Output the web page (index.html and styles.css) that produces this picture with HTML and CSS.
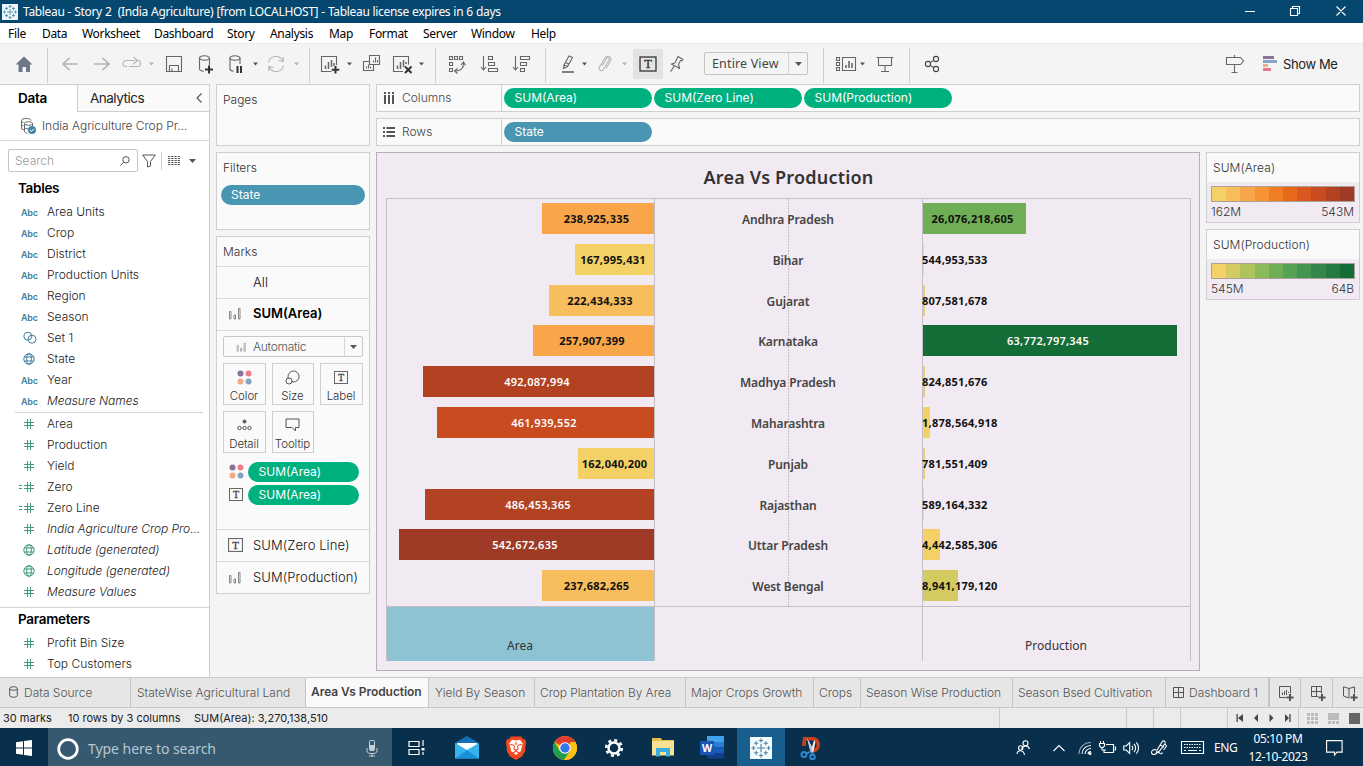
FILE: index.html
```html
<!DOCTYPE html>
<html lang="en">
<head>
<meta charset="utf-8">
<title>Tableau - Story 2 (India Agriculture)</title>
<link rel="stylesheet" href="styles.css">
</head>
<body>
<svg class="defs" width="0" height="0" aria-hidden="true">
  <symbol id="hash" viewBox="0 0 12 12"><path d="M4.500 1v10M7.500 1v10M1 4.500h10M1 7.500h10"/></symbol>
  <symbol id="eqhash" viewBox="0 0 16 12"><path d="M8.500 1v10M11.500 1v10M5 4.500h10M5 7.500h10M0 4.500h3M0 7.500h3"/></symbol>
  <symbol id="globe" viewBox="0 0 12 12"><circle cx="6" cy="6" r="5.2"/><ellipse cx="6" cy="6" rx="2.3" ry="5.2"/><path d="M1.3 4h9.4M1.3 8h9.4"/></symbol>
  <symbol id="set" viewBox="0 0 14 14"><circle cx="4.8" cy="5.2" r="4"/><circle cx="9" cy="8.2" r="4"/></symbol>
  <symbol id="bars" viewBox="0 0 13 13"><path d="M1.500 4.500h1.500v7.500h-1.500zM6 8h1.500v4h-1.500zM10.500 1.500h1.500v10.500h-1.500z"/></symbol>
  <symbol id="caret" viewBox="0 0 7 4"><path d="M0 0h7L3.500 4z"/></symbol>
  <symbol id="tbox" viewBox="0 0 14 13"><rect x=".5" y=".5" width="13" height="12" fill="none" stroke="#666"/><text x="7" y="9.800" text-anchor="middle" font-family="Liberation Serif, serif" font-size="10" fill="#444" stroke="#444" stroke-width=".3">T</text></symbol>
  <symbol id="dots" viewBox="0 0 15 15"><circle cx="3.500" cy="3.500" r="3" fill="#8a6f97"/><circle cx="11.500" cy="3.500" r="3" fill="#ef7c87"/><circle cx="3.500" cy="11.500" r="3" fill="#eeaa84"/><circle cx="11.500" cy="11.500" r="3" fill="#83a4c8"/></symbol>
  <symbol id="logo" viewBox="0 0 16 16"><path d="M8 5v6M5 8h6M8 1v3M6.500 2.500h3M8 12v3M6.500 13.500h3M2.500 6.500v3M1 8h3M13.500 6.500v3M12 8h3M4.500 3v3M3 4.500h3M11.500 3v3M10 4.500h3M4.500 10v3M3 11.500h3M11.500 10v3M10 11.500h3"/></symbol>
</svg>

<header class="titlebar">
  <svg class="applogo" width="16" height="16"><use href="#logo"/></svg>
  <span class="wintitle">Tableau - Story 2&nbsp; (India Agriculture) [from LOCALHOST] - Tableau license expires in 6 days</span>
  <svg class="winbtns" width="106" height="12" viewBox="0 0 106 12"><path d="M0 6.500h10M45.500 3.500h7v7h-7zM47.500 3.500v-2h7v7h-2M91.500 1.500l9 9M100.500 1.500l-9 9"/></svg>
</header>

<nav class="menubar">
  <span>File</span><span>Data</span><span>Worksheet</span><span>Dashboard</span><span>Story</span><span>Analysis</span><span>Map</span><span>Format</span><span>Server</span><span>Window</span><span>Help</span>
</nav>

<div class="toolbar">
  <svg class="ic" viewBox="0 0 20 20"><path class="home" d="M10 2.500L18.500 10.500h-2.500v7.500h-4V13H8.500v5h-4v-7.500H1.500z"/></svg>
  <i class="sep"></i>
  <svg class="ic dim" viewBox="0 0 20 20"><path d="M18 10H3M9.500 4L3 10l6.500 6" stroke-width="1.700"/></svg>
  <svg class="ic dim" viewBox="0 0 20 20"><path d="M2 10h15M10.500 4L17 10l-6.500 6" stroke-width="1.700"/></svg>
  <svg class="ic dim" viewBox="0 0 20 20"><path d="M5 12.500H3.500a2.500 2.500 0 0 1-2.500-2.500V9.500a3 3 0 0 1 3-3h9M11.500 3l4 3.500-4 3.500M16 6.500a2.500 2.500 0 0 1 2.500 2.500v1a2.500 2.500 0 0 1-2.500 2.500H7"/></svg>
  <svg class="car dim"><use href="#caret"/></svg>
  <svg class="ic" viewBox="0 0 20 20"><path d="M2.500 2.500h15v15h-15zM5.500 17v-5.500h9V17M8 14.500V17"/></svg>
  <svg class="ic" viewBox="0 0 20 20"><ellipse cx="8.500" cy="4" rx="5" ry="2.200"/><path d="M3.500 4v11c0 1.200 2 2 4.500 2.200M13.500 4v7"/><path class="heavy" d="M13 11.500v8M9 15.500h8"/></svg>
  <svg class="ic" viewBox="0 0 20 20"><ellipse cx="9" cy="4" rx="5" ry="2.200"/><path d="M4 4v11c0 1.200 1.500 2 3.500 2.200M14 4v6"/><path class="heavy" d="M11.500 12v7M15 12v7"/></svg>
  <svg class="car"><use href="#caret"/></svg>
  <svg class="ic dim" viewBox="0 0 20 20"><path d="M2.500 8.500a7.500 7.500 0 0 1 14-2M17.500 3l-.5 4.500-4.500-1M17.500 11.500a7.500 7.500 0 0 1-14 2M2.500 17l.5-4.500 4.500 1"/></svg>
  <svg class="car dim"><use href="#caret"/></svg>
  <i class="sep"></i>
  <svg class="ic" viewBox="0 0 20 20"><path d="M11.500 17.500h-10v-15h15V11"/><path d="M5.500 15v-3.500M8.500 15V8M11.500 13V6M14 12V9" stroke-width="1.500"/><path class="heavy" d="M15.500 12v7.500M11.700 15.800h7.600"/></svg>
  <svg class="car"><use href="#caret"/></svg>
  <svg class="ic" viewBox="0 0 20 20"><path d="M8.500 1.500h10v9h-10zM8.500 7.500h-6v9h10v-6M5.500 14.500v-2M7.500 14.500v-4M9.500 14.500v-2M12.500 8.500v-2M14.500 8.500v-5M16.500 8.500V6"/></svg>
  <svg class="ic" viewBox="0 0 20 20"><path d="M10 17.500H.5v-15h15v8"/><path d="M4.500 15v-3.500M7.500 15V8M10.500 13V6M13 10V8" stroke-width="1.500"/><path class="heavy" d="M12 12.500l6.500 6.500M18.500 12.500l-6.500 6.500"/></svg>
  <svg class="car"><use href="#caret"/></svg>
  <i class="sep"></i>
  <svg class="ic" viewBox="0 0 20 20"><path d="M2.500 2.500h3v3h-3zM7.500 2.500h3v3h-3zM12.500 2.500h3v3h-3zM2.500 8.500h3v3h-3zM2.500 14.500h3v3h-3zM16.500 9c.5 5-3 8-8 8M14 11l2.500-3 2 3.500M10.500 14.500l-3 2.500 3 2.500"/></svg>
  <svg class="ic" viewBox="0 0 20 20"><path d="M3.500 2v14M1 13l2.500 3L6 13M8.500 2.500h4v3h-4zM8.500 8.500h6v3h-6zM8.500 14.500h9v3h-9z"/></svg>
  <svg class="ic" viewBox="0 0 20 20"><path d="M3.500 2v14M1 13l2.500 3L6 13M8.500 2.500h9v3h-9zM8.500 8.500h6v3h-6zM8.500 14.500h4v3h-4z"/></svg>
  <i class="sep"></i>
  <svg class="ic" viewBox="0 0 20 20"><path d="M6 11l5-9 3.500 1.500-5 9zM6 11l-.5 3.500L9.500 12.500M7.500 8.500l3.500 1.800"/><path d="M4 18h12" stroke-width="1.600"/></svg>
  <svg class="car"><use href="#caret"/></svg>
  <svg class="ic dim" viewBox="0 0 20 20"><path d="M7 12l4.500-7.500c1-1.700 3.500-.5 2.500 1.500L8.500 15.500c-1.500 2.500-5.500.5-4-2.500L10 4c2-3.500 7.500-1 5.500 2.800L11 14.500"/></svg>
  <svg class="car dim"><use href="#caret"/></svg>
  <span class="tbtn"><svg width="18" height="16" viewBox="0 0 18 16"><rect x="1" y="1" width="16" height="14" fill="none" stroke="#333" stroke-width="1.300"/><text x="9" y="12" text-anchor="middle" font-family="Liberation Serif, serif" font-size="12.500" fill="#333" stroke="#333" stroke-width=".3">T</text></svg></span>
  <svg class="ic" viewBox="0 0 20 20"><path d="M11 2.500l5 3-1 1.200-1.500-.2-2 4 1 4-8-4.500 3.500-1.300 2-4zM7 12.300l-3.500 5.500"/></svg>
  <div class="viewsel"><span>Entire View</span><b><svg class="car"><use href="#caret"/></svg></b></div>
  <i class="sep"></i>
  <svg class="ic" viewBox="0 0 20 20"><path d="M.5 3.500h3v3h-3zM.5 8.500h3v3h-3zM.5 13.500h3v3h-3zM6.500 3.500h13v13h-13z"/><path d="M10 14v-3M13 14V7M16 14V9" stroke-width="1.600"/></svg>
  <svg class="car"><use href="#caret"/></svg>
  <svg class="ic" viewBox="0 0 20 20"><path d="M1.500 3.500h17M3.500 3.500v8h13v-8M10 11.500v6M6 17.500h8"/></svg>
  <i class="sep"></i>
  <svg class="ic dark" viewBox="0 0 20 20"><circle cx="6" cy="10" r="2.600"/><circle cx="14" cy="5" r="2.600"/><circle cx="14" cy="15" r="2.600"/><path d="M8.300 8.600l3.500-2.200M8.300 11.400l3.500 2.200"/></svg>
  <svg class="ic" viewBox="0 0 20 20"><path d="M1.500 3.500h14l3 3.500-3 3.500h-14zM9.500 1v2M9.500 11v7.500M6.500 18.500h6"/></svg>
  <div class="showme"><svg width="15" height="16" viewBox="0 0 15 16"><path fill="#8a7396" d="M0 0h11v3H0z"/><path fill="#86a5c6" d="M0 4h14v3H0z"/><path fill="#efa98b" d="M0 8h5v3H0z"/><path fill="#e37784" d="M0 12h8v3H0z"/></svg><span>Show Me</span></div>
</div>

<main class="work">
  <aside class="datapane">
    <div class="dptabs"><b>Data</b><span>Analytics<svg width="6" height="10" viewBox="0 0 6 10"><path d="M5.500.5L1 5l4.500 4.500" fill="none" stroke="#555" stroke-width="1.200"/></svg></span></div>
    <div class="source">
      <svg width="16" height="16" viewBox="0 0 16 16"><g fill="none" stroke="#666"><path d="M1.500 11V3M11 2.500C10.500 1 8.500.5 6 .5S1.500 1.300 1.500 2.500c0 1 1 1.500 2 2M1.500 7l2 1M1.500 11l3 1"/><ellipse cx="8.500" cy="5.500" rx="4" ry="1.800"/><path d="M4.500 5.500v8c0 .8 1.500 1.500 3 1.700M12.500 5.500v3M4.500 9.500c1 1 2 1.300 3.500 1.300"/></g><circle cx="12" cy="12" r="4" fill="#4385a6"/><path d="M10 12l1.500 1.500L14 10.800" fill="none" stroke="#fff"/></svg>
      <span>India Agriculture Crop Pr...</span>
    </div>
    <div class="searchrow">
      <div class="search"><span>Search</span><svg width="10" height="10" viewBox="0 0 10 10"><circle cx="6" cy="3.800" r="3.200"/><path d="M3.500 6.200L.5 9.500"/></svg></div>
      <svg class="funnel" width="14" height="14" viewBox="0 0 14 14"><path d="M.7 1h12.600L8.500 7.500v4.500L5.500 13V7.500z"/></svg>
      <i></i>
      <svg class="grid" width="12" height="10" viewBox="0 0 12 10"><path d="M0 .5h12M0 2.500h12M0 4.500h12M0 6.500h12M0 8.500h12" stroke="#555" stroke-dasharray="2.250 1" /></svg>
      <svg class="car"><use href="#caret"/></svg>
    </div>
    <h3>Tables</h3>
    <ul class="fields dims">
      <li><em>Abc</em>Area Units</li>
      <li><em>Abc</em>Crop</li>
      <li><em>Abc</em>District</li>
      <li><em>Abc</em>Production Units</li>
      <li><em>Abc</em>Region</li>
      <li><em>Abc</em>Season</li>
      <li><svg class="blue" width="14" height="14"><use href="#set"/></svg>Set 1</li>
      <li><svg class="blue" width="12" height="12"><use href="#globe"/></svg>State</li>
      <li><em>Abc</em>Year</li>
      <li class="it"><em>Abc</em>Measure Names</li>
    </ul>
    <ul class="fields meas">
      <li><svg width="12" height="12"><use href="#hash"/></svg>Area</li>
      <li><svg width="12" height="12"><use href="#hash"/></svg>Production</li>
      <li><svg width="12" height="12"><use href="#hash"/></svg>Yield</li>
      <li><svg class="calc" width="16" height="12"><use href="#eqhash"/></svg>Zero</li>
      <li><svg class="calc" width="16" height="12"><use href="#eqhash"/></svg>Zero Line</li>
      <li class="it"><svg width="12" height="12"><use href="#hash"/></svg>India Agriculture Crop Pro...</li>
      <li class="it"><svg width="12" height="12"><use href="#globe"/></svg>Latitude (generated)</li>
      <li class="it"><svg width="12" height="12"><use href="#globe"/></svg>Longitude (generated)</li>
      <li class="it"><svg width="12" height="12"><use href="#hash"/></svg>Measure Values</li>
    </ul>
    <section class="params">
      <h3>Parameters</h3>
      <ul class="fields">
        <li><svg width="12" height="12"><use href="#hash"/></svg>Profit Bin Size</li>
        <li><svg width="12" height="12"><use href="#hash"/></svg>Top Customers</li>
      </ul>
    </section>
  </aside>

  <div class="cards">
    <section class="card pages"><h4>Pages</h4></section>
    <section class="card filters"><h4>Filters</h4><div class="pill blue">State</div></section>
    <section class="card marks">
      <h4>Marks</h4>
      <div class="mrow"><span></span>All</div>
      <div class="mrow on"><svg class="barsic" width="13" height="13"><use href="#bars"/></svg>SUM(Area)</div>
      <div class="mbody">
        <div class="mtype"><svg class="barsic" width="10" height="10"><use href="#bars"/></svg><span>Automatic</span><b><svg class="car"><use href="#caret"/></svg></b></div>
        <div class="mbtns">
          <div><svg width="15" height="15"><use href="#dots"/></svg>Color</div>
          <div><svg class="ln" width="15" height="15" viewBox="0 0 15 15"><circle cx="8.500" cy="6.500" r="5.500"/><circle cx="4" cy="11" r="3" fill="#fafafa"/></svg>Size</div>
          <div><svg width="14" height="13"><use href="#tbox"/></svg>Label</div>
          <div><svg class="ln" width="15" height="12" viewBox="0 0 15 12"><circle cx="7.500" cy="2.500" r="1.500" fill="#555"/><circle cx="2.500" cy="9" r="1.700"/><circle cx="7.500" cy="9" r="1.700"/><circle cx="12.500" cy="9" r="1.700"/></svg>Detail</div>
          <div><svg class="ln" width="15" height="14" viewBox="0 0 15 14"><path d="M1 1h13v8.500h-3.500V13L7 9.500H1z"/></svg>Tooltip</div>
        </div>
        <div class="mpill"><svg width="15" height="15"><use href="#dots"/></svg><div class="pill green">SUM(Area)</div></div>
        <div class="mpill"><svg width="14" height="13"><use href="#tbox"/></svg><div class="pill green">SUM(Area)</div></div>
      </div>
      <div class="mrow"><svg width="15" height="14"><use href="#tbox"/></svg>SUM(Zero Line)</div>
      <div class="mrow"><svg class="barsic" width="13" height="13"><use href="#bars"/></svg>SUM(Production)</div>
    </section>
  </div>

  <div class="right">
    <div class="shelf"><div class="sname"><svg width="12" height="12" viewBox="0 0 12 12"><path d="M2 0v2M2 3v9M6 0v2M6 3v9M10 0v2M10 3v9"/></svg>Columns</div><div class="pill green">SUM(Area)</div><div class="pill green">SUM(Zero Line)</div><div class="pill green">SUM(Production)</div></div>
    <div class="shelf"><div class="sname"><svg width="12" height="12" viewBox="0 0 12 12"><path d="M0 2h2M3.500 2H12M0 6h2M3.500 6H12M0 10h2M3.500 10H12"/></svg>Rows</div><div class="pill blue">State</div></div>
    <div class="viewrow">
      <section class="viz">
        <h1>Area Vs Production</h1>
        <div class="plot">
          <div class="col area">
            <div><b style="width:112px;background:#f9a64b">238,925,335</b></div>
            <div><b style="width:79px;background:#f3d166">167,995,431</b></div>
            <div><b style="width:105px;background:#f8bd5c">222,434,333</b></div>
            <div><b style="width:121px;background:#f9a64b">257,907,399</b></div>
            <div><b class="lt" style="width:231px;background:#b34223">492,087,994</b></div>
            <div><b class="lt" style="width:217px;background:#c94c21">461,939,552</b></div>
            <div><b style="width:76px;background:#f3d166">162,040,200</b></div>
            <div><b class="lt" style="width:229px;background:#b34223">486,453,365</b></div>
            <div><b class="lt" style="width:255px;background:#9e3a26">542,672,635</b></div>
            <div><b style="width:112px;background:#f8bd5c">237,682,265</b></div>
          </div>
          <div class="col names">
            <div>Andhra Pradesh</div><div>Bihar</div><div>Gujarat</div><div>Karnataka</div><div>Madhya Pradesh</div><div>Maharashtra</div><div>Punjab</div><div>Rajasthan</div><div>Uttar Pradesh</div><div>West Bengal</div>
          </div>
          <div class="col prod">
            <div><b style="width:103px;background:#6fae55">26,076,218,605</b></div>
            <div><b class="sm" style="width:1px;background:#ead9a2">544,953,533</b></div>
            <div><b class="sm" style="width:2px;background:#e8cd83">807,581,678</b></div>
            <div><b class="lt" style="width:254px;background:#146c36">63,772,797,345</b></div>
            <div><b class="sm" style="width:2px;background:#e8cd83">824,851,676</b></div>
            <div><b class="sm" style="width:7px;background:#f3d166">1,878,564,918</b></div>
            <div><b class="sm" style="width:2px;background:#e8cd83">781,551,409</b></div>
            <div><b class="sm" style="width:1px;background:#ead9a2">589,164,332</b></div>
            <div><b class="sm" style="width:17px;background:#f3d166">4,442,585,306</b></div>
            <div><b class="sm" style="width:35px;background:#d3ca60">8,941,179,120</b></div>
          </div>
        </div>
        <div class="axes"><div class="sel">Area</div><div></div><div>Production</div></div>
      </section>
      <div class="legends">
        <section class="card legend"><h4>SUM(Area)</h4><div class="lbody"><div class="ramp orange"></div><p><span>162M</span><span>543M</span></p></div></section>
        <section class="card legend"><h4>SUM(Production)</h4><div class="lbody"><div class="ramp grn"></div><p><span>545M</span><span>64B</span></p></div></section>
      </div>
    </div>
  </div>
</main>

<div class="tabs">
  <div class="ds"><svg width="9" height="12" viewBox="0 0 9 12"><ellipse cx="4.500" cy="2.500" rx="3.800" ry="1.800"/><path d="M.7 2.500v7c0 2.300 7.600 2.300 7.600 0v-7"/></svg>Data Source</div>
  <div>StateWise Agricultural Land</div>
  <div class="active">Area Vs Production</div>
  <div>Yield By Season</div>
  <div>Crop Plantation By Area</div>
  <div>Major Crops Growth</div>
  <div>Crops</div>
  <div>Season Wise Production</div>
  <div>Season Bsed Cultivation</div>
  <div class="dash"><svg width="11" height="11" viewBox="0 0 11 11"><path d="M.5.500h10v10h-10zM5.500.500v10M.5 5.500h10"/></svg>Dashboard 1</div>
  <div class="nw first"><svg width="16" height="15" viewBox="0 0 16 15"><path d="M8 11.500H1.500V.5h11v7M4.500 9V6.500M6.500 9V5M8.500 9V4M10.500 7V6"/><path class="plus" d="M12 8v7M8.500 11.500h7"/></svg></div>
  <div class="nw"><svg width="16" height="15" viewBox="0 0 16 15"><path d="M8 10.500H1.500V.5h10v7M6.500.5v10M1.500 5.500h10"/><path class="plus" d="M12 8v7M8.500 11.500h7"/></svg></div>
  <div class="nw"><svg width="16" height="15" viewBox="0 0 16 15"><path d="M7 12L1.500 10V.8L7 2.500 12.500.8V7.500M7 2.500V12"/><path class="plus" d="M12 8v7M8.500 11.500h7"/></svg></div>
</div>

<div class="status">
  <span class="s1">30 marks</span><span class="s2">10 rows by 3 columns</span><span class="s3">SUM(Area): 3,270,138,510</span>
  <i></i><i></i><i></i><i></i>
  <div class="pager"><svg width="56" height="8" viewBox="0 0 56 8"><path d="M.5 0h1.300v8H.5zM7 0v8L2 4zM22 0v8L18 4zM33.500 0v8L37.500 4zM49 0v8l4-4zM53.300 0h1.300v8h-1.300z"/></svg></div>
  <div class="views"><svg width="54" height="11" viewBox="0 0 54 11"><path fill="#bbb" d="M0 0h3v3H0zM4 0h3v3H4zM8 0h3v3H8zM0 4h3v3H0zM4 4h3v3H4zM8 4h3v3H8zM0 8h3v3H0zM4 8h3v3H4zM8 8h3v3H8zM21 0h11v7H21zM21 8h3v3h-3zM25 8h3v3h-3zM29 8h3v3h-3z"/><path fill="#666" d="M42 0h11v11H42z"/></svg></div>
</div>

<footer class="taskbar">
  <div class="start"><svg width="16" height="16" viewBox="0 0 16 16"><path fill="#fff" d="M0 2.200l7-1v6.300H0zM8 1.100L16 0v7.500H8zM0 8.500h7v6.300l-7-1zM8 8.500h8V16l-8-1.100z"/></svg></div>
  <div class="wsearch"><svg width="22" height="22" viewBox="0 0 22 22"><circle cx="11" cy="11" r="9.300" fill="none" stroke="#fff" stroke-width="2.700"/></svg><span>Type here to search</span><svg width="12" height="17" viewBox="0 0 12 17"><rect x="3.500" y=".5" width="5" height="10" rx="1" fill="none" stroke="#c3cfd6"/><path fill="#c3cfd6" d="M4 5h4v5.500H4z"/><path d="M1 8v3c0 2 2 2.500 5 2.500s5-.5 5-2.500V8M6 13.500v3M3 16h6" fill="none" stroke="#c3cfd6"/></svg></div>
  <div><svg width="18" height="16" viewBox="0 0 18 16" fill="none" stroke="#fff" stroke-width="1.200"><path d="M1 1.500h10v5H1zM1 9.500h10v5H1zM15 0v6M15 12v3"/><path d="M13.500 8h3v2.500h-3z" fill="#fff" stroke="none"/></svg></div>
  <div><svg width="24" height="23" viewBox="0 0 24 23"><path fill="#1670b8" d="M0 7l12-7 12 7v4H0z"/><path fill="#fff" d="M2 7h20v6l-10 4L2 13z"/><path fill="#35b4ee" d="M0 7l12 7 12-7v15.500H0z"/><path fill="#1c8fda" d="M0 22.500L12 14 24 22.500z"/></svg></div>
  <div><svg width="22" height="24" viewBox="0 0 22 24"><path fill="#f4461f" d="M6 .5h10l2 2.500 2.500.5.500 3-1 9-3 5-6 3.500-6-3.500-3-5-1-9 .5-3L4 3z"/><path fill="#fff" d="M11 4.500l4-.8 2.800 3.800-1.300 4.500-.5 3L11 19l-5-4-.5-3L4.200 7.500 7 3.700z"/><path d="M5 8.300l4 1M17 8.300l-4 1M11 6v3M9.500 9.500L9 13l2 1.500 2-1.500-.5-3.500M8 17l3-2 3 2" fill="none" stroke="#f4461f" stroke-width="1.100"/></svg></div>
  <div><svg width="24" height="24" viewBox="0 0 24 24"><circle cx="12" cy="12" r="12" fill="#fbc116"/><path fill="#df3b2f" d="M12 12L1.600 6A12 12 0 0 1 22.400 6z"/><path fill="#249e4c" d="M1.600 6A12 12 0 0 0 11 24l6-9-5-3-5 3z"/><path fill="#fbc116" d="M22.400 6A12 12 0 0 1 11 24l6-9 0-9z"/><circle cx="12" cy="12" r="5.800" fill="#fff"/><circle cx="12" cy="12" r="4.700" fill="#3477e8"/></svg></div>
  <div><svg width="20" height="20" viewBox="0 0 20 20"><circle cx="10" cy="10" r="5.500" fill="none" stroke="#fff" stroke-width="2.500"/><circle cx="10" cy="10" r="7.800" fill="none" stroke="#fff" stroke-width="2.600" stroke-dasharray="3.060 3.060"/></svg></div>
  <div><svg width="22" height="19" viewBox="0 0 22 19"><path fill="#e9bd4b" d="M0 0h9l1 2h12v4H0z"/><path fill="#fbe193" d="M0 3h22v14.500H0z"/><path fill="#39aee0" d="M4 10h14v8.500h-4V14H8v4.500H4z"/></svg></div>
  <div><svg width="24" height="23" viewBox="0 0 24 23"><path fill="#3fa3e8" d="M7 0h17v6H7z"/><path fill="#2b7cd3" d="M7 6h17v5.500H7z"/><path fill="#185abd" d="M7 11.500h17v5.500H7z"/><path fill="#103f91" d="M7 17h17v5.500H7z"/><path fill="#1a55b4" d="M0 5h14v14H0z"/><text x="7" y="16" text-anchor="middle" font-family="Open Sans, sans-serif" font-weight="700" font-size="10.500" fill="#fff">W</text></svg></div>
  <div class="current"><svg class="tblogo" width="22" height="22"><use href="#logo"/></svg></div>
  <div><svg width="22" height="24" viewBox="0 0 22 24"><path fill="#c9411c" d="M3 1h9c5 0 8 3 8 7.500S17 16 13.500 16.500L13 13c2.500-.5 3.500-2 3.500-4.500S15 4.500 12 4.500H6V10H2z"/><path fill="#eee" d="M7 2l5 9 2-7 1.500 2-2.500 12-2-1-1-3z"/><path fill="#b9bcc0" d="M9 5l3 6v6l-2-3z"/><g fill="none" stroke="#2c88d0" stroke-width="2"><circle cx="4" cy="18.500" r="2.500"/><circle cx="12.500" cy="21" r="2.300"/><path d="M6 17.500l4-1.500M12.500 18.500l-.5-2.500"/></g></svg></div>
  <div class="tray">
    <svg width="14" height="16" viewBox="0 0 14 16"><circle cx="9.500" cy="3.300" r="2.500"/><path d="M5.500 9c1-4 7-4 8 0M1 14c.5-4.500 6.500-4.500 7.500 1"/><circle cx="4.700" cy="8" r="2.200"/></svg>
    <svg width="12" height="8" viewBox="0 0 12 8"><path d="M.5 7L6 1.500 11.500 7"/></svg>
    <svg width="14" height="14" viewBox="0 0 14 14"><path d="M1 13C1 6.500 6 1.500 13 1.500" opacity=".6"/><path d="M4 13c0-5 4-8.500 9-8.500M7 13c0-3 3-5.500 6-5.500M10 13c0-1.500 1.500-2.500 3-2.500"/><circle cx="12" cy="12.500" r="1" fill="#fff"/></svg>
    <svg width="17" height="12" viewBox="0 0 17 12"><path d="M7 2.500h7.500v8H5V8M15.500 5h1v3h-1M1.500-1v2M4.500-1v2M.5 1.500h5v2.500L4 5.500H2L.5 4zM3 5.500v2.500h4"/></svg>
    <svg width="17" height="14" viewBox="0 0 17 14"><path d="M.7 5h2.500l3.500-3.500v11L3.200 9H.7zM9 5c1 1 1 3 0 4M11 3c2.200 2 2.200 6 0 8M13.300 1.300c3 3.200 3 8.200 0 11.400"/></svg>
    <svg width="17" height="16" viewBox="0 0 17 16"><path d="M5 10c-2.500-1-4.500.5-4.500 2.500s2.500 2.500 4 1.500 3-2.500 4-1 2.500.5 3-.5M6 10l5-8c1-2 4-1 3 1.500L8.500 11 5.500 13zM9 5l4 2M14 4l1.500 2-3 4"/></svg>
    <svg width="23" height="13" viewBox="0 0 23 13"><path d="M.5.500h22v12H.5z"/><path d="M3 3.500h17M3 6.500h17" stroke-dasharray="1.500 1"/><path d="M3 9.500h2M7 9.500h9M18 9.500h2"/></svg>
    <span class="eng">ENG</span>
    <span class="clock">05:10 PM<br>12-10-2023</span>
    <svg width="17" height="16" viewBox="0 0 17 16"><path d="M.6.600h15.500v11.500H11L8.500 15v-2.900H.6z"/></svg>
  </div>
</footer>
</body>
</html>
```

FILE: styles.css
```css
* { box-sizing: border-box; }
body { margin: 0; width: 1363px; height: 766px; overflow: hidden; display: flex; flex-direction: column; background: #f4f4f4; font: 12px/16px "Noto Sans", sans-serif; color: #333; }
h1, h3, h4, p, ul { margin: 0; padding: 0; list-style: none; }
svg { display: block; flex: none; overflow: visible; }
.defs { position: absolute; }

.titlebar { height: 23px; flex: none; background: #06476f; color: #fff; display: flex; align-items: center; padding-left: 2px; }
.applogo { background: #eef5fa; stroke: #3d86ad; stroke-width: .8; }
.wintitle { margin-left: 5px; letter-spacing: -.33px; word-spacing: .3px; white-space: nowrap; }
.winbtns { margin-left: auto; margin-right: 12px; margin-top: -2px; fill: none; stroke: #fff; stroke-width: 1.100; }

.menubar { height: 20px; flex: none; background: #fff; color: #000; display: grid; grid-template-columns: 34px 40px 72px 73px 43px 59px 40px 54px 48px 60px 40px; padding: 3px 0 0 8px; letter-spacing: -.32px; white-space: nowrap; }

.toolbar { height: 41px; flex: none; border-top: 1px solid #e8e8e8; padding: 0 0 0 14px; display: grid; align-items: center; grid-template-columns: 33px 13px 32px 30px 27px 15px 32px 30px 27px 13px 28px 15px 11px 27px 14px 32px 26px 16px 12px 33px 32px 33px 13px 24px 13px 27px 11px 34px 37px 119px 13px 24px 15px 34px 13px 303px 38px 100px; }
.ic { width: 20px; height: 20px; fill: none; stroke: #666; stroke-width: 1.100; }
.ic.dark { stroke: #444; }
.ic .home { fill: #6d7787; stroke: none; }
.ic .heavy { stroke: #333; stroke-width: 2; }
.ic.dim { stroke: #b4b4b4; }
.car { width: 7px; height: 4px; fill: #555; }
.toolbar > .car { width: 5px; }
.car.dim { fill: #b4b4b4; }
.sep { width: 1px; height: 35px; background: #d0d0d0; margin-top: 2px; }
.tbtn { width: 30px; height: 30px; background: #e3e3e3; display: grid; place-items: center; }
.viewsel { width: 104px; height: 23px; border: 1px solid #c4c4c4; border-radius: 2px; display: flex; align-items: center; padding-left: 7px; color: #444; font-size: 12.500px; letter-spacing: .15px; white-space: nowrap; margin-top: -1px; }
.viewsel b { margin-left: auto; width: 19px; height: 21px; border-left: 1px solid #d4d4d4; display: grid; place-items: center; }
.showme { display: flex; align-items: center; gap: 5px; color: #222; font: 13px/16px Inter, sans-serif; letter-spacing: -.4px; white-space: nowrap; }

.work { height: 593px; flex: none; display: flex; }
.datapane { width: 210px; border-right: 1px solid #cfcfcf; border-top: 1px solid #cfcfcf; background: #fff; font-family: Inter, sans-serif; }
.dptabs { height: 27px; display: flex; font-size: 13.500px; color: #222; }
.dptabs b { width: 77px; padding: 5px 0 0 18px; font-weight: 600; color: #000; letter-spacing: -.3px; }
.dptabs span { flex: 1; display: flex; align-items: center; justify-content: space-between; padding: 0 7px 1px 12px; border-left: 1px solid #cfcfcf; border-bottom: 1px solid #cfcfcf; background: #fafafa; letter-spacing: -.5px; }
.source { height: 29px; border-bottom: 1px solid #d9d9d9; display: flex; align-items: center; gap: 6px; padding: 0 0 1px 20px; color: #444; font-weight: 300; letter-spacing: -.04px; white-space: nowrap; }
.searchrow { display: flex; align-items: center; height: 39px; padding-left: 8px; }
.search { width: 130px; height: 23px; border: 1px solid #c4c4c4; border-radius: 2px; display: flex; align-items: center; justify-content: space-between; padding: 0 7px 0 6px; color: #999; font-weight: 300; }
.search svg, .funnel { fill: none; stroke: #555; }
.funnel { margin-left: 4px; }
.searchrow i { width: 1px; height: 18px; background: #ccc; margin: 0 6px 0 5px; }
.grid { margin-right: 9px; }
.datapane h3 { font-size: 13.500px; font-weight: 600; line-height: 16px; color: #000; padding-left: 18px; letter-spacing: -.3px; }
.dims { padding: 5px 0 1px; }
.fields li { height: 21px; display: grid; grid-template-columns: 47px 1fr; align-items: center; font-weight: 300; white-space: nowrap; color: #1a1a1a; }
.fields em { font: 600 9px/19px Inter, sans-serif; color: #417f9d; padding: 2px 0 0 21px; letter-spacing: -.2px; }
.fields svg { margin-left: 23px; fill: none; stroke: #3f9b79; stroke-width: 1; }
.fields svg.calc { margin-left: 19px; }
.fields svg.blue { stroke: #417f9d; }
.it { font-style: italic; letter-spacing: -.05px; }
.meas { border-top: 1px solid #d4d4d4; margin: 0 6px 0 15px; }
.meas li { margin-left: -15px; }
.params { border-top: 1px solid #d4d4d4; margin-top: 5px; padding-top: 3px; }
.params .fields { padding-top: 5px; }

.cards { width: 166px; padding-left: 6px; padding-right: 6px; display: flex; flex-direction: column; gap: 6px; font-family: Inter, sans-serif; }
.card { border: 1px solid #cfcfcf; background: #fafafa; }
.card h4 { font-weight: 300; font-size: 12px; color: #333; padding: 7px 0 0 6px; line-height: 16px; }
.pages { height: 62px; }
.filters { height: 78px; }
.marks { height: 358px; }
.pill { height: 20px; border-radius: 10px; color: #fff; padding-left: 10.500px; font: 400 12px/20px Inter, sans-serif; white-space: nowrap; }
.pill.blue { background: #4996b2; }
.pill.green { background: #00b180; }
.filters .pill { margin: 9px 4px 0; padding-left: 10px; }
.marks h4 { height: 29px; }
.mrow { height: 32px; border-top: 1px solid #d9d9d9; display: grid; grid-template-columns: 24px 1fr; align-items: center; padding: 0 0 1px 12px; font-size: 13px; font-weight: 300; color: #111; letter-spacing: .08px; white-space: nowrap; }
.mrow.on { font-weight: 600; color: #000; letter-spacing: 0; padding-bottom: 3px; }
.mrow > svg { margin-left: -1px; }
.barsic { fill: none; stroke: #888; }
.mbody { height: 199px; border-top: 1px solid #d9d9d9; padding: 5px 6px 0; }
.mtype { width: 140px; height: 21px; border: 1px solid #c8c8c8; border-radius: 2px; display: flex; align-items: center; padding-left: 12px; color: #555; font-weight: 300; letter-spacing: -.3px; }
.mtype span { margin-left: 7px; }
.mtype b { margin-left: auto; width: 18px; height: 19px; border-left: 1px solid #d4d4d4; display: grid; place-items: center; }
.mtype .barsic { stroke: #999; }
.mbtns { display: grid; grid-template-columns: 43px 42px 43px; grid-auto-rows: 42px; gap: 6px; padding-top: 6px; margin-bottom: 7px; }
.mbtns div { border: 1px solid #cfcfcf; display: grid; grid-template-rows: 26px 13px; place-items: center; font-size: 11.500px; line-height: 13px; color: #333; font-weight: 300; letter-spacing: -.1px; padding-right: 1px; }
.mpill { display: grid; grid-template-columns: 19px 111px; align-items: center; padding-left: 6px; height: 23px; }
.ln { fill: none; stroke: #555; }

.right { flex: 1; display: flex; flex-direction: column; gap: 6px; padding-right: 3px; }
.shelf { height: 28px; border: 1px solid #cfcfcf; background: #fafafa; display: flex; align-items: center; gap: 2px; }
.sname { width: 125px; height: 26px; border-right: 1px solid #cfcfcf; display: flex; align-items: center; gap: 7px; padding-left: 6px; color: #444; font: 300 12px/16px Inter, sans-serif; }
.sname svg { stroke: #555; stroke-width: 2; }
.shelf .pill { width: 148px; }
.viewrow { display: flex; gap: 6px; }
.viz { width: 824px; height: 519px; border: 1px solid #b5b0b5; background: #f2eaf2; padding: 0 8px 0 9px; }
.viz h1 { font: 600 18px/25px "Noto Sans", sans-serif; color: #333; text-align: center; height: 45px; padding-top: 12px; letter-spacing: .2px; }
.plot { height: 409px; border: 1px solid #c5c0c6; display: grid; grid-template-columns: 267px 269px 1fr; }
.col { display: grid; grid-template-rows: repeat(10, 40.800px); }
.col > div { padding-top: 4px; height: 35px; }
.col b { display: flex; justify-content: center; align-items: center; height: 31px; font: 700 11px/31px "Noto Sans", sans-serif; letter-spacing: .25px; color: #111; white-space: nowrap; }
.col b.lt { color: #fff; font-weight: 600; }
.area b { padding-right: 3px; }
.prod b:not(.sm) { padding-right: 4px; }
.area > div { display: flex; justify-content: flex-end; }
.names { border-left: 1px solid #c5c0c6; border-right: 1px solid #c5c0c6; text-align: center; font: 600 12px/33px "Noto Sans", sans-serif; letter-spacing: -.12px; color: #444; background: linear-gradient(#c3bfc5 66%, transparent 0) 133px 0 / 1px 3px repeat-y; }
.names > div { padding-right: 1px; }
.col b.sm { justify-content: flex-start; text-indent: -1px; }
.axes { height: 54px; display: grid; grid-template-columns: 268px 268px 1fr; border-left: 1px solid #c5c0c6; border-right: 1px solid #c5c0c6; text-align: center; font-size: 12px; line-height: 16px; }
.axes div { padding: 31px 1px 0 0; border-right: 1px solid #c5c0c6; }
.axes div:last-child { border-right: 0; }
.axes .sel { background: #8dc3d3; }
.legends { flex: 1; display: flex; flex-direction: column; gap: 6px; font-family: Inter, sans-serif; }
.legend { height: 71px; display: flex; flex-direction: column; }
.legend h4 { height: 29px; letter-spacing: .08px; }
.lbody { flex: 1; background: #f2eaf2; padding: 4px 4px 0; }
.ramp { height: 16px; border: 1px solid #aaa29a; }
.orange { background: linear-gradient(90deg, #f3d166 0 10%, #f8bd5c 0 20%, #f9a64b 0 30%, #f69335 0 40%, #f07d22 0 50%, #e6681b 0 60%, #da5820 0 70%, #c94c21 0 80%, #b34223 0 90%, #9e3a26 0); }
.grn { background: linear-gradient(90deg, #f3d166 0 10%, #d3ca60 0 20%, #afc35b 0 30%, #8dba58 0 40%, #6fae55 0 50%, #54a355 0 60%, #439551 0 70%, #35864a 0 80%, #257941 0 90%, #146c36 0); }
.legend p { display: flex; justify-content: space-between; font-weight: 300; padding: 2px 1px 0 0; }

.tabs { height: 31px; flex: none; background: #e6e6e6; border-top: 1px solid #c9c9c9; border-bottom: 1px solid #c9c9c9; display: grid; grid-template-columns: 131px 175px 123px 106px 151px 128px 47px 152px 153px 103px 32px 32px 30px; color: #555; font: 300 12px/29px Inter, sans-serif; letter-spacing: -.05px; }
.tabs > div { border-right: 1px solid #c4c4c4; padding-left: 5px; white-space: nowrap; }
.tabs > div:nth-child(2), .tabs > div:nth-child(4) { padding-left: 6px; letter-spacing: 0; }
.tabs .active { background: #fafafa; font-weight: 600; color: #444; line-height: 27px; padding-left: 5px; letter-spacing: -.05px; }
.tabs svg { fill: none; stroke: #555; }
.tabs .ds, .tabs .dash { display: flex; align-items: center; gap: 6px; padding-left: 9px; letter-spacing: 0; }
.tabs .ds svg { margin-bottom: 2px; }
.tabs .dash { padding-left: 7px; gap: 5px; }
.tabs .nw { display: grid; place-items: center; padding: 1px 0 0 2px; }
.tabs .first { border-left: 1px solid #c4c4c4; }
.tabs .nw:last-child { border: 0; padding-left: 3px; }
.tabs .plus { stroke-width: 2; }
.status { height: 20px; flex: none; background: #ebebeb; display: grid; grid-template-columns: 65px 126px 802px 127px 27px 27px 47px 71px 1fr; padding-left: 3px; color: #222; font: 400 11px/20px Inter, sans-serif; white-space: nowrap; }
.status i { border-left: 1px solid #c9c9c9; margin-left: 3px; margin-right: -3px; }
.pager, .views { display: grid; align-items: center; margin-left: 3px; }
.pager { fill: #444; padding-left: 8px; border-left: 1px solid #c9c9c9; margin-right: -3px; }
.views { padding-left: 8px; border-left: 1px solid #c9c9c9; }

.taskbar { height: 38px; flex: none; background: #082f4c; display: grid; grid-template-columns: 48px 344px 50px 49px 49px 49px 49px 49px 50px 48px 51px 1fr; color: #fff; }
.taskbar > div { display: grid; place-items: center; padding-top: 1px; }
.taskbar .wsearch { background: #36596f; display: flex; align-items: center; padding: 3px 14px 0 9px; font-size: 14px; letter-spacing: -.05px; color: #b7c6cf; }
.wsearch span { flex: 1; padding-left: 9px; }
.taskbar .current { background: #185f90; }
.tblogo { background: #f4f9fc; stroke: #4b86a4; stroke-width: .8; }
.taskbar .tray { display: grid; grid-template-columns: 37px 25px 21px 24px 28px 30px 33px 33px 79px 38px; place-items: center start; padding-left: 180px; border-right: 1px solid #51697a; fill: none; stroke: #fff; stroke-width: 1.100; }
.eng, .clock { stroke: none; font-size: 12px; letter-spacing: -.35px; }
.clock { line-height: 18px; text-align: center; width: 62px; white-space: nowrap; }
```
